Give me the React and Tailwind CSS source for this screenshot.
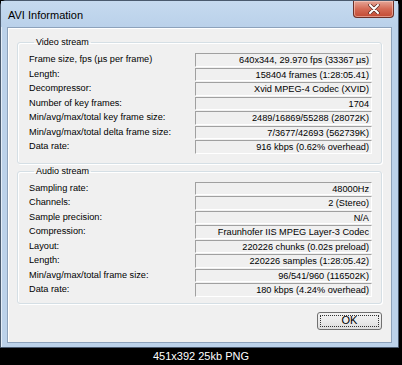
import React from "react";

const videoRows = [
  ["Frame size, fps (µs per frame)", "640x344, 29.970 fps (33367 µs)"],
  ["Length:", "158404 frames (1:28:05.41)"],
  ["Decompressor:", "Xvid MPEG-4 Codec (XVID)"],
  ["Number of key frames:", "1704"],
  ["Min/avg/max/total key frame size:", "2489/16869/55288 (28072K)"],
  ["Min/avg/max/total delta frame size:", "7/3677/42693 (562739K)"],
  ["Data rate:", "916 kbps (0.62% overhead)"],
];

const audioRows = [
  ["Sampling rate:", "48000Hz"],
  ["Channels:", "2 (Stereo)"],
  ["Sample precision:", "N/A"],
  ["Compression:", "Fraunhofer IIS MPEG Layer-3 Codec"],
  ["Layout:", "220226 chunks (0.02s preload)"],
  ["Length:", "220226 samples (1:28:05.42)"],
  ["Min/avg/max/total frame size:", "96/541/960 (116502K)"],
  ["Data rate:", "180 kbps (4.24% overhead)"],
];

const Group = ({ title, rows, className }) => (
  <fieldset
    className={
      "mx-[9px] border border-[#d5dfe5] rounded-[3px] pl-[11px] pr-[9px] shadow-[inset_1px_1px_0_#fff,1px_1px_0_#fff] " +
      className
    }
  >
    <legend className="ml-[5px] px-[2px] leading-[13px] text-[9px]">{title}</legend>
    <div className="flex flex-col gap-px pt-[4px]">
      {rows.map(([label, value], i) => (
        <div key={i} className="flex items-center h-[13.5px]">
          <div className="flex-1 text-[9.2px] leading-[13px] whitespace-nowrap">{label}</div>
          <div className="w-[177px] h-full border-t border-l border-[#a0a0a0] border-b border-r border-b-white border-r-white text-right pr-[2px] text-[9.2px] leading-[12px] whitespace-nowrap overflow-hidden">
            {value}
          </div>
        </div>
      ))}
    </div>
  </fieldset>
);

const App = () => {
  return (
    <div
      className="w-[402px] h-[365px] bg-black flex flex-col overflow-hidden text-black"
      style={{ fontFamily: '"Liberation Sans", Arial, sans-serif' }}
    >
      <div className="w-[399px] h-[348px] border border-[#4a5a6e] rounded-t-[6px] bg-[#bcd2ea] flex flex-col px-[6px] pb-[4px] shadow-[inset_1px_1px_0_#e4eef9]">
        {/* title bar */}
        <div className="h-[26px] flex items-start justify-between bg-gradient-to-b from-[#c6daef] to-[#bad1ea] -mx-[6px] pl-[7px] pr-[4px]">
          <div className="text-[11px] leading-[26px] pt-[1px]">AVI Information</div>
          <div className="w-[41px] h-[17px] rounded-b-[4px] border border-t-0 border-[#6b2f27] bg-gradient-to-b from-[#e4a597] via-[#d46a55] to-[#c24a33] flex items-center justify-center shadow-[inset_0_0_0_1px_rgba(255,220,210,0.5)]">
            <svg width="12" height="10" viewBox="0 0 12 10">
              <path d="M2 1 L10 9 M10 1 L2 9" stroke="#5a2a22" strokeWidth="3.4" strokeLinecap="round" />
              <path d="M2 1 L10 9 M10 1 L2 9" stroke="#ffffff" strokeWidth="2" strokeLinecap="round" />
            </svg>
          </div>
        </div>
        {/* client area */}
        <div className="flex-1 border border-[#8da2bb] bg-[#f0f0f0] shadow-[inset_1px_1px_0_#fff] flex flex-col">
          <Group title="Video stream" rows={videoRows} className="mt-[8px] pb-[9px]" />
          <Group title="Audio stream" rows={audioRows} className="mt-[1px] pb-[6px]" />
          <div className="flex justify-end mr-[9px] mt-[8px]">
            <div className="w-[65px] h-[18px] border border-[#707070] rounded-[3px] bg-gradient-to-b from-[#f2f2f2] via-[#ebebeb] to-[#dcdcdc] p-[2px]">
              <div className="w-full h-full border border-dotted border-[#333] flex items-center justify-center text-[11px] leading-none">
                OK
              </div>
            </div>
          </div>
        </div>
      </div>
      <div className="flex-1 flex items-center justify-center text-white text-[11px] leading-none">
        451x392 25kb PNG
      </div>
    </div>
  );
};

export default App;
